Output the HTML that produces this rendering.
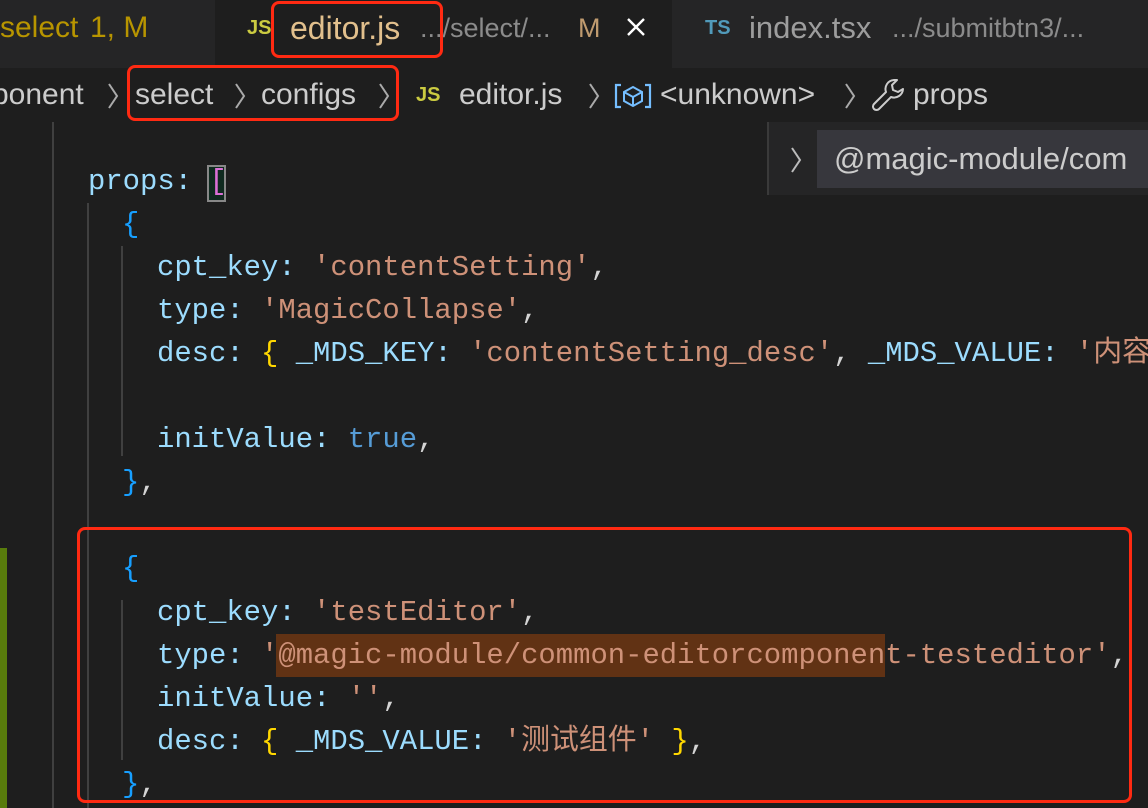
<!DOCTYPE html>
<html><head><meta charset="utf-8"><style>
*{margin:0;padding:0;box-sizing:border-box}
body{width:1148px;height:808px;background:#1e1e1e;overflow:hidden;position:relative;font-family:"Liberation Sans","Noto Sans CJK SC",sans-serif}
#clip{position:absolute;left:0;top:0;width:1148px;height:808px;overflow:hidden}
.abs{position:absolute;white-space:pre}
.tabs{position:absolute;left:0;top:0;width:1148px;height:68px;background:#252526}
.ui{font-size:30px;line-height:56px;top:0}
.bc{font-size:30px;top:68px;line-height:54px;color:#cccccc}
.code{font-family:"Liberation Mono","Noto Sans CJK SC",monospace;font-size:28.9px;line-height:43px;color:#9cdcfe;left:0}
.s{color:#ce9178}.b{color:#179fff}.y{color:#ffd700}.w{color:#d4d4d4}.k{color:#569cd6}.p{color:#da70d6}
.red{position:absolute;border:3px solid #ff2a12;border-radius:8px}
.g{position:absolute;width:2px;background:#404040}
.ch{position:absolute;top:82px}
</style></head><body><div id="clip">
<div class="tabs"></div>
<div class="abs" style="left:215px;top:0;width:457px;height:68px;background:#1e1e1e"></div>
<div class="abs ui" style="left:0;color:#b89500">select</div>
<div class="abs ui" style="left:90px;color:#b89500">1, M</div>
<div class="abs ui" style="left:247px;color:#cbcb41;font-size:20px;font-weight:bold">JS</div>
<div class="abs ui" style="left:290px;color:#e2c08d;font-size:32px">editor.js</div>
<div class="abs ui" style="left:420px;color:#8b8b8b;font-size:27px">.../select/...</div>
<div class="abs ui" style="left:578px;color:#c09b6f;font-size:27px">M</div>
<svg class="abs" style="left:626px;top:17px" width="20" height="20" viewBox="0 0 20 20"><path d="M2 2L18 18M18 2L2 18" stroke="#fff" stroke-width="2.4"/></svg>
<div class="abs ui" style="left:705px;color:#519aba;font-size:20px;font-weight:bold">TS</div>
<div class="abs ui" style="left:749px;color:#9d9d9d;font-size:31px">index.tsx</div>
<div class="abs ui" style="left:892px;color:#8b8b8b;font-size:27px">.../submitbtn3/...</div>

<div class="abs bc" style="left:-8px">ponent</div>
<div class="abs bc" style="left:135px">select</div>
<div class="abs bc" style="left:261px">configs</div>
<div class="abs bc" style="left:416px;color:#cbcb41;font-size:20px;font-weight:bold">JS</div>
<div class="abs bc" style="left:459px">editor.js</div>
<div class="abs bc" style="left:660px">&lt;unknown&gt;</div>
<div class="abs bc" style="left:913px">props</div>
<svg class="ch" style="left:106px" width="14" height="28" viewBox="0 0 14 28"><path d="M3 2L11 14L3 26" stroke="#aaa" stroke-width="2" fill="none"/></svg>
<svg class="ch" style="left:233px" width="14" height="28" viewBox="0 0 14 28"><path d="M3 2L11 14L3 26" stroke="#aaa" stroke-width="2" fill="none"/></svg>
<svg class="ch" style="left:377px" width="14" height="28" viewBox="0 0 14 28"><path d="M3 2L11 14L3 26" stroke="#aaa" stroke-width="2" fill="none"/></svg>
<svg class="ch" style="left:587px" width="14" height="28" viewBox="0 0 14 28"><path d="M3 2L11 14L3 26" stroke="#aaa" stroke-width="2" fill="none"/></svg>
<svg class="ch" style="left:843px" width="14" height="28" viewBox="0 0 14 28"><path d="M3 2L11 14L3 26" stroke="#aaa" stroke-width="2" fill="none"/></svg>
<svg class="abs" style="left:614px;top:82px" width="38" height="28" viewBox="0 0 38 28"><path d="M7 3H2V25H7M31 3H36V25H31" stroke="#75beff" stroke-width="2.2" fill="none"/><path d="M19 5L28 10V19L19 24L10 19V10Z M10 10L19 15L28 10M19 15V24" stroke="#75beff" stroke-width="2" fill="none"/></svg>
<svg class="abs" style="left:870px;top:77px" width="36" height="36" viewBox="0 0 36 36"><path d="M24 3a9 9 0 0 0-8 12L4 27a3 3 0 0 0 5 5L21 20a9 9 0 0 0 12-8l-5 3-5-2-1-5 5-5z" stroke="#ccc" stroke-width="2" fill="none" stroke-linejoin="round"/></svg>

<div class="abs" style="left:767px;top:122px;width:381px;height:73px;background:#252526;border-left:2px solid #3a3a3a"></div>
<div class="abs" style="left:817px;top:130px;width:331px;height:58px;background:#37373d"></div>
<svg class="abs" style="left:789px;top:146px" width="14" height="28" viewBox="0 0 14 28"><path d="M3 2L11 14L3 26" stroke="#bbb" stroke-width="2" fill="none"/></svg>
<div class="abs" style="left:834px;top:130px;font-size:31px;line-height:58px;color:#ccc">@magic-module/com</div>

<div class="g" style="left:52px;top:122px;height:686px"></div>
<div class="g" style="left:87px;top:203px;height:605px"></div>
<div class="g" style="left:121px;top:246px;height:210px"></div>
<div class="g" style="left:121px;top:600px;height:160px"></div>
<div class="abs" style="left:0;top:548px;width:7px;height:260px;background:#587c0c"></div>

<div class="abs" style="left:276px;top:634px;width:609px;height:43px;background:#613214"></div>
<div class="abs" style="left:207px;top:165px;width:19px;height:37px;border:2px solid #888;background:#0f2a1f"></div>

<div class="abs code" style="top:160px;left:88px">props: <span class="p">[</span></div>
<div class="abs code" style="top:203px;left:122px"><span class="b">{</span></div>
<div class="abs code" style="top:246px;left:157px">cpt_key: <span class="s">'contentSetting'</span><span class="w">,</span></div>
<div class="abs code" style="top:289px;left:157px">type: <span class="s">'MagicCollapse'</span><span class="w">,</span></div>
<div class="abs code" style="top:332px;left:157px">desc: <span class="y">{</span> _MDS_KEY: <span class="s">'contentSetting_desc'</span><span class="w">,</span> _MDS_VALUE: <span class="s">'内容</span></div>
<div class="abs code" style="top:418px;left:157px">initValue: <span class="k">true</span><span class="w">,</span></div>
<div class="abs code" style="top:461px;left:122px"><span class="b">}</span><span class="w">,</span></div>
<div class="abs code" style="top:547px;left:122px"><span class="b">{</span></div>
<div class="abs code" style="top:591px;left:157px">cpt_key: <span class="s">'testEditor'</span><span class="w">,</span></div>
<div class="abs code" style="top:634px;left:157px">type: <span class="s">'@magic-module/common-editorcomponent-testeditor'</span><span class="w">,</span></div>
<div class="abs code" style="top:677px;left:157px">initValue: <span class="s">''</span><span class="w">,</span></div>
<div class="abs code" style="top:720px;left:157px">desc: <span class="y">{</span> _MDS_VALUE: <span class="s">'测试组件'</span> <span class="y">}</span><span class="w">,</span></div>
<div class="abs code" style="top:763px;left:122px"><span class="b">}</span><span class="w">,</span></div>

<div class="red" style="left:271px;top:1px;width:172px;height:57px"></div>
<div class="red" style="left:127px;top:65px;width:272px;height:56px"></div>
<div class="red" style="left:77px;top:527px;width:1055px;height:276px"></div>
</div></body></html>
